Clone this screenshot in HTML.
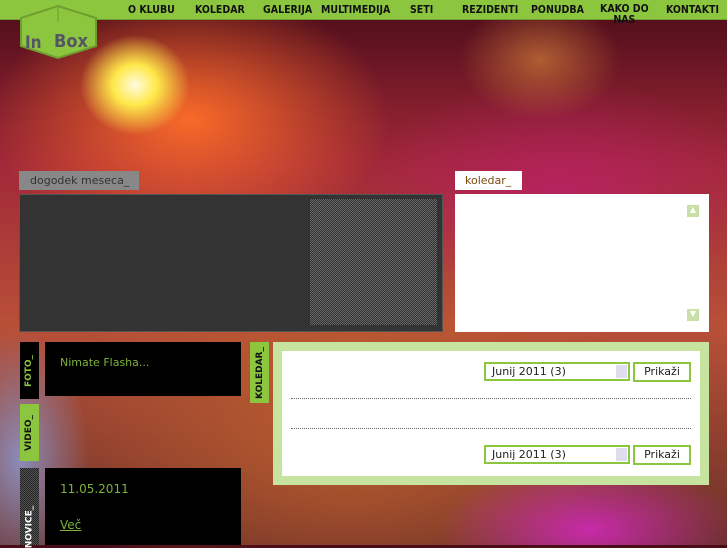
<!DOCTYPE html>
<html><head><meta charset="utf-8"><style>
*{margin:0;padding:0;box-sizing:border-box}
body{width:727px;height:545px;overflow:hidden;position:relative;font-family:"DejaVu Sans","Liberation Sans",sans-serif;
background:
radial-gradient(ellipse 55px 50px at 135px 85px,#fffbe0 0%,#ffe94a 40%,rgba(255,150,40,0) 100%),
radial-gradient(ellipse 200px 130px at 190px 120px,rgba(255,110,40,.95),rgba(230,60,60,0) 100%),
radial-gradient(ellipse 80px 60px at 540px 60px,rgba(220,140,60,.6),rgba(0,0,0,0) 100%),
radial-gradient(ellipse 200px 110px at 560px 190px,rgba(190,30,110,.7),rgba(0,0,0,0) 100%),
radial-gradient(ellipse 70px 130px at 20px 460px,rgba(140,160,220,.8),rgba(0,0,0,0) 100%),
radial-gradient(ellipse 150px 70px at 590px 530px,rgba(220,40,200,.8),rgba(0,0,0,0) 100%),
radial-gradient(ellipse 300px 200px at 350px 430px,rgba(190,95,45,.9),rgba(0,0,0,0) 100%),
linear-gradient(180deg,#4a0c18 0%,#a02838 30%,#b85038 60%,#6a3028 100%);}
.nav{position:absolute;left:0;top:0;width:727px;height:20px;background:#8cc63e;border-bottom:1px solid #6f9e2e}
.nav span{position:absolute;top:4px;font-size:10.5px;font-weight:bold;color:#111;font-family:"DejaVu Sans Condensed","DejaVu Sans",sans-serif}
.tab{position:absolute;font-size:11px}
.vt{position:absolute;width:19px;display:flex;align-items:center;justify-content:center}
.vt b{transform:rotate(-90deg);font-size:9px;white-space:nowrap;color:#111}
.blk{position:absolute;background:#000}
.sel{position:absolute;width:146px;height:19px;border:2px solid #8cc63e;background:#fff;font-size:11px;padding:1px 6px;color:#222}
.sel i{position:absolute;right:1px;top:1px;width:11px;height:13px;background:#dde;}
.btn{position:absolute;width:58px;height:20px;border:2px solid #8cc63e;background:#fff;font-size:11px;text-align:center;line-height:16px;color:#222}
.dot{position:absolute;left:291px;width:400px;border-top:1px dotted #666}
</style></head><body>
<div class="nav">
<span style="left:128px">O KLUBU</span><span style="left:195px">KOLEDAR</span><span style="left:263px">GALERIJA</span><span style="left:321px">MULTIMEDIJA</span><span style="left:410px">SETI</span><span style="left:462px">REZIDENTI</span><span style="left:531px">PONUDBA</span><span style="left:600px;line-height:11px;text-align:center">KAKO DO<br>NAS</span><span style="left:666px">KONTAKTI</span>
</div>
<svg style="position:absolute;left:18px;top:4px" width="82" height="56"><polygon points="40,2 78,14 78,42 40,54 3,42 3,14" fill="#8cc63e" stroke="#6f9e2e" stroke-width="2"/><line x1="40" y1="2" x2="40" y2="18" stroke="#6f9e2e"/><text x="7" y="44" font-family="DejaVu Sans Condensed,DejaVu Sans" font-weight="bold" font-size="17" fill="#555565">In</text><text x="36" y="43" font-family="DejaVu Sans Condensed,DejaVu Sans" font-weight="bold" font-size="18" fill="#555565">Box</text></svg>

<div class="tab" style="left:19px;top:171px;width:120px;height:19px;background:#888;color:#333;padding:3px 0 0 11px">dogodek meseca_</div>
<div style="position:absolute;left:19px;top:194px;width:424px;height:138px;background:#333;border:1px solid #555"></div>
<div style="position:absolute;left:310px;top:199px;width:127px;height:126px;background:repeating-conic-gradient(#666 0 25%,#333 0 50%) 0 0/2px 2px"></div>

<div class="tab" style="left:455px;top:171px;width:67px;height:19px;background:#fff;color:#7a4a10;padding:3px 0 0 10px">koledar_</div>
<div style="position:absolute;left:455px;top:194px;width:254px;height:138px;background:#fff"></div>
<div style="position:absolute;left:687px;top:205px;width:12px;height:12px;background:#c8e0a8;color:#fff;font-size:8px;text-align:center">▲</div>
<div style="position:absolute;left:687px;top:309px;width:12px;height:12px;background:#c8e0a8;color:#fff;font-size:8px;text-align:center">▼</div>

<div class="vt" style="left:20px;top:342px;height:57px;background:#000"><b style="color:#8cc63e">FOTO_</b></div>
<div class="blk" style="left:45px;top:342px;width:196px;height:54px;color:#7cb33a;font-size:11px;padding:14px 0 0 15px">Nimate Flasha...</div>
<div class="vt" style="left:20px;top:404px;height:57px;background:#8cc63e"><b>VIDEO_</b></div>
<div class="vt" style="left:20px;top:468px;height:77px;background:repeating-conic-gradient(#555 0 25%,#222 0 50%) 0 0/2px 2px"><b style="color:#fff;margin-top:40px">NOVICE_</b></div>
<div class="blk" style="left:45px;top:468px;width:196px;height:77px;color:#7cb33a;font-size:12px;padding:14px 0 0 15px">11.05.2011<div style="margin-top:22px;text-decoration:underline">Več</div></div>

<div class="vt" style="left:250px;top:342px;height:61px;background:#8cc63e"><b>KOLEDAR_</b></div>
<div style="position:absolute;left:273px;top:342px;width:436px;height:143px;background:#c7e3a0"></div>
<div style="position:absolute;left:282px;top:351px;width:418px;height:125px;background:#fff"></div>
<div class="sel" style="left:484px;top:362px">Junij 2011 (3)<i></i></div>
<div class="btn" style="left:633px;top:362px">Prikaži</div>
<div class="dot" style="top:398px"></div>
<div class="dot" style="top:428px"></div>
<div class="sel" style="left:484px;top:445px">Junij 2011 (3)<i></i></div>
<div class="btn" style="left:633px;top:445px">Prikaži</div>
</body></html>
